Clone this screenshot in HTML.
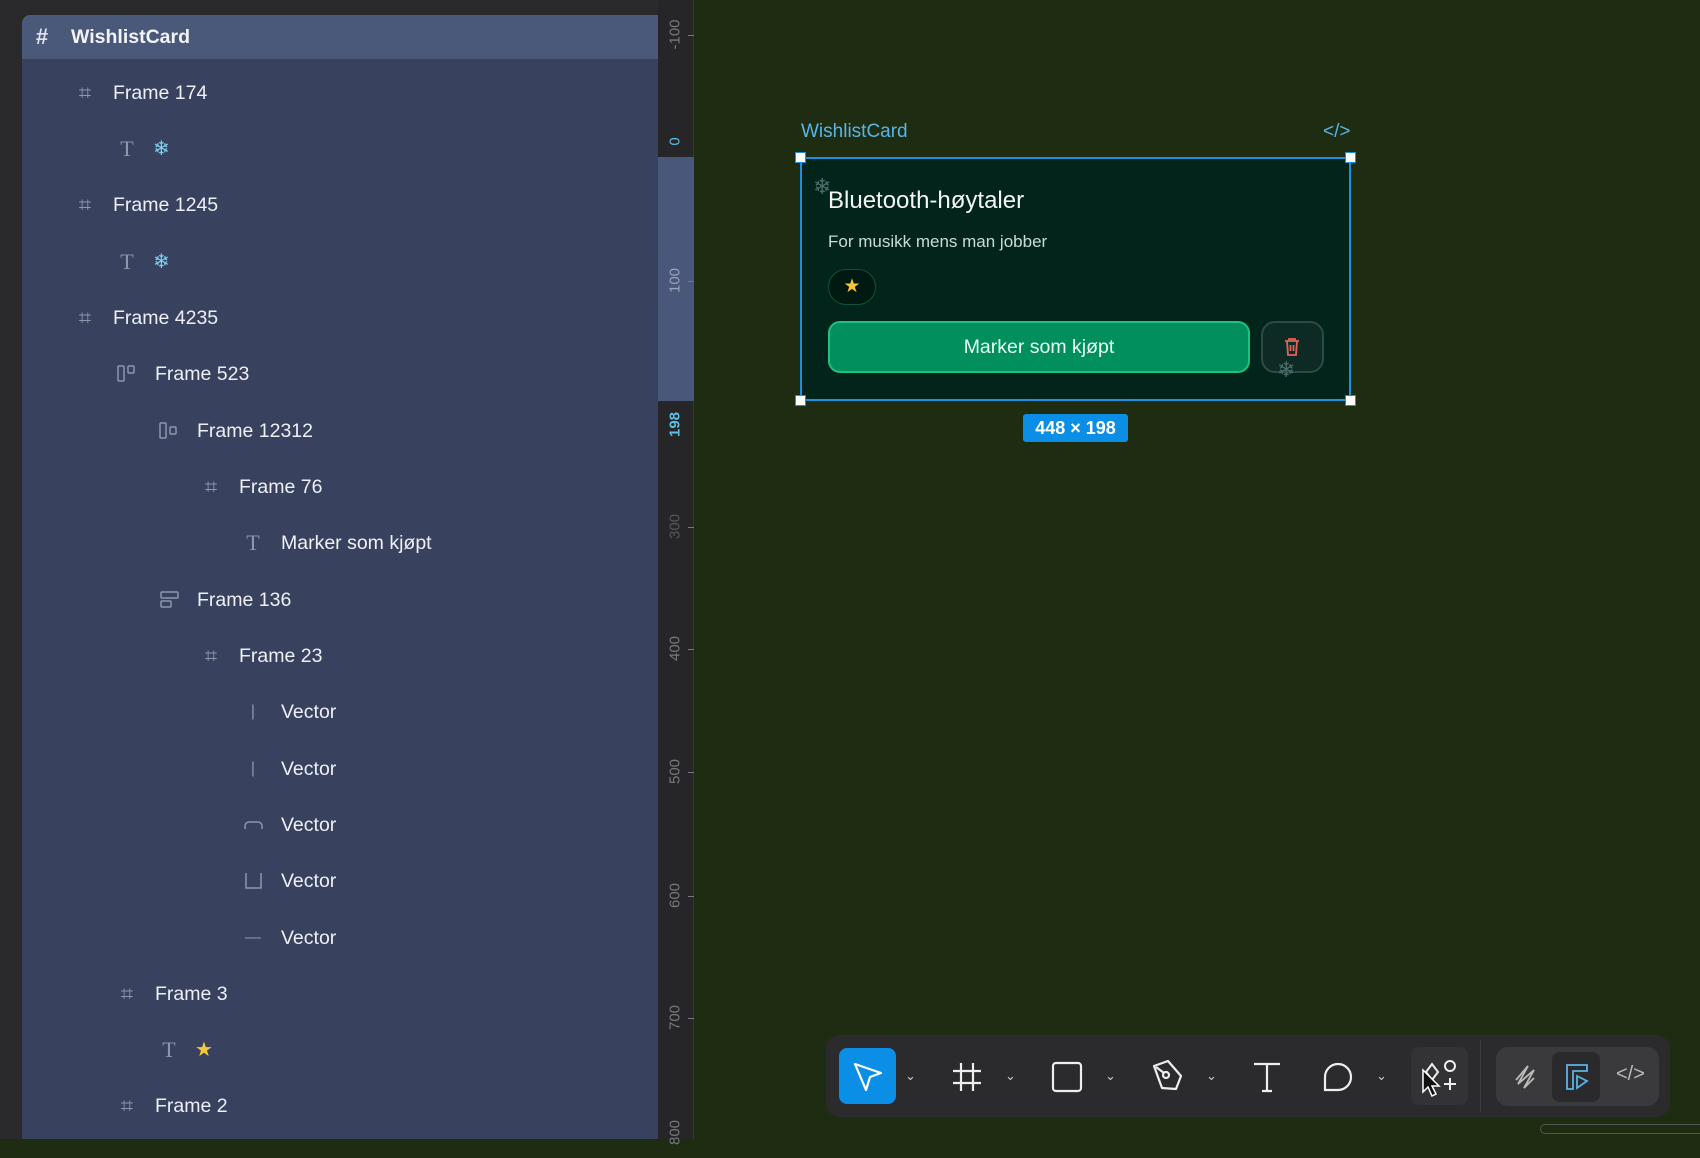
<!DOCTYPE html>
<html><head><meta charset="utf-8"><style>
*{margin:0;padding:0;box-sizing:border-box}
body{width:1700px;height:1139px;overflow:hidden;background:#1e2c12;font-family:"Liberation Sans",sans-serif;position:relative}
.abs{position:absolute}
#lb{left:0;top:0;width:22px;height:1139px;background:#2a2a2c}
#top{left:0;top:0;width:658px;height:15px;background:#2a2a2c}
#panel{left:22px;top:15px;width:636px;height:1124px;background:#38425e;border-top-left-radius:8px}
#sel{left:22px;top:15px;width:636px;height:44px;background:#4a5879;border-top-left-radius:8px}
.row{position:absolute;height:30px;line-height:30px;color:#eef0f5;font-size:19.5px;white-space:nowrap}
.ic{position:absolute;top:0;width:24px;height:30px;color:#8e96aa;font-size:22px;text-align:center}
.ic svg{position:absolute;left:2px;top:5px}
#ruler{left:658px;top:0;width:36px;height:1139px;background:#262628;border-right:1px solid #34363a}
#rh{left:658px;top:157px;width:36px;height:244px;background:#48577a}
.rl{position:absolute;left:658px;color:#77797e;font-size:15px;transform:rotate(-90deg);transform-origin:center;text-align:center;width:50px;margin-left:-8px}
.tk{position:absolute;left:688px;width:6px;height:1px;background:#77797e}
.hd{position:absolute;width:11px;height:11px;background:#fff;border:1.5px solid #1a8fe0}
.tb{position:absolute;top:1035px;height:82px;background:#2b2b2d;border-radius:14px}
.car{position:absolute;top:1068px;color:#ccc;font-size:13px}
</style></head><body>
<div id="lb" class="abs"></div><div id="top" class="abs"></div>
<div id="panel" class="abs"></div><div id="sel" class="abs"></div>

<div class="row" style="left:30px;top:22px;font-weight:bold;color:#f2f4f8"><span class="ic" style="left:0;color:#dfe3ee">#</span><span style="position:absolute;left:41px">WishlistCard</span></div>

<div class="row" style="left:73px;top:78px"><span class="ic" style="left:0">⌗</span><span style="position:absolute;left:40px">Frame 174</span></div>
<div class="row" style="left:115px;top:134px"><span class="ic" style="left:0;font-family:'Liberation Serif',serif">T</span><span style="position:absolute;left:38px;color:#7fd3f0;font-size:20px">❄</span></div>
<div class="row" style="left:73px;top:190px"><span class="ic" style="left:0">⌗</span><span style="position:absolute;left:40px">Frame 1245</span></div>
<div class="row" style="left:115px;top:247px"><span class="ic" style="left:0;font-family:'Liberation Serif',serif">T</span><span style="position:absolute;left:38px;color:#7fd3f0;font-size:20px">❄</span></div>
<div class="row" style="left:73px;top:303px"><span class="ic" style="left:0">⌗</span><span style="position:absolute;left:40px">Frame 4235</span></div>
<div class="row" style="left:115px;top:359px"><span class="ic" style="left:0"><svg width="22" height="20" viewBox="0 0 22 20" fill="none" stroke="#8e96aa" stroke-width="1.5"><rect x="1" y="2" width="6" height="15" rx="1"/><rect x="11" y="2" width="6" height="7" rx="1"/></svg></span><span style="position:absolute;left:40px">Frame 523</span></div>
<div class="row" style="left:157px;top:416px"><span class="ic" style="left:0"><svg width="22" height="20" viewBox="0 0 22 20" fill="none" stroke="#8e96aa" stroke-width="1.5"><rect x="1" y="2" width="6" height="15" rx="1"/><rect x="11" y="6" width="6" height="7" rx="1"/></svg></span><span style="position:absolute;left:40px">Frame 12312</span></div>
<div class="row" style="left:199px;top:472px"><span class="ic" style="left:0">⌗</span><span style="position:absolute;left:40px">Frame 76</span></div>
<div class="row" style="left:241px;top:528px"><span class="ic" style="left:0;font-family:'Liberation Serif',serif">T</span><span style="position:absolute;left:40px">Marker som kjøpt</span></div>
<div class="row" style="left:157px;top:585px"><span class="ic" style="left:0"><svg width="22" height="20" viewBox="0 0 22 20" fill="none" stroke="#8e96aa" stroke-width="1.5"><rect x="2" y="2" width="17" height="6" rx="1"/><rect x="2" y="11" width="10" height="6" rx="1"/></svg></span><span style="position:absolute;left:40px">Frame 136</span></div>
<div class="row" style="left:199px;top:641px"><span class="ic" style="left:0">⌗</span><span style="position:absolute;left:40px">Frame 23</span></div>
<div class="row" style="left:241px;top:697px"><span class="ic" style="left:0;font-size:16px">|</span><span style="position:absolute;left:40px">Vector</span></div>
<div class="row" style="left:241px;top:754px"><span class="ic" style="left:0;font-size:16px">|</span><span style="position:absolute;left:40px">Vector</span></div>
<div class="row" style="left:241px;top:810px"><span class="ic" style="left:0"><svg width="22" height="20" viewBox="0 0 22 20" fill="none" stroke="#8e96aa" stroke-width="1.5"><path d="M2 14V11a4 4 0 0 1 4-4h9a4 4 0 0 1 4 4v3"/></svg></span><span style="position:absolute;left:40px">Vector</span></div>
<div class="row" style="left:241px;top:866px"><span class="ic" style="left:0"><svg width="22" height="20" viewBox="0 0 22 20" fill="none" stroke="#8e96aa" stroke-width="1.5"><path d="M3 2v15h15V2"/></svg></span><span style="position:absolute;left:40px">Vector</span></div>
<div class="row" style="left:241px;top:923px"><span class="ic" style="left:0;font-size:16px">—</span><span style="position:absolute;left:40px">Vector</span></div>
<div class="row" style="left:115px;top:979px"><span class="ic" style="left:0">⌗</span><span style="position:absolute;left:40px">Frame 3</span></div>
<div class="row" style="left:157px;top:1035px"><span class="ic" style="left:0;font-family:'Liberation Serif',serif">T</span><span style="position:absolute;left:38px;color:#f6c83a;font-size:20px">★</span></div>
<div class="row" style="left:115px;top:1091px"><span class="ic" style="left:0">⌗</span><span style="position:absolute;left:40px">Frame 2</span></div>

<div id="ruler" class="abs"></div><div id="rh" class="abs"></div>
<div class="rl" style="top:26px">-100</div>
<div class="rl" style="top:133px;color:#5bbfe8">0</div>
<div class="rl" style="top:272px;color:#9aa3b8">100</div>
<div class="rl" style="top:416px;color:#5bbfe8;font-weight:bold">198</div>
<div class="rl" style="top:518px;color:#55575c">300</div>
<div class="rl" style="top:640px">400</div>
<div class="rl" style="top:763px">500</div>
<div class="rl" style="top:887px">600</div>
<div class="rl" style="top:1009px">700</div>
<div class="rl" style="top:1124px">800</div>
<div class="tk" style="top:35px"></div><div class="tk" style="top:281px"></div><div class="tk" style="top:527px"></div><div class="tk" style="top:649px"></div><div class="tk" style="top:772px"></div><div class="tk" style="top:896px"></div><div class="tk" style="top:1018px"></div>

<div class="abs" style="left:801px;top:121px;color:#5ab4e6;font-size:19px">WishlistCard</div>
<div class="abs" style="left:1323px;top:121px;color:#5ab4e6;font-size:19px">&lt;/&gt;</div>

<div class="abs" style="left:800px;top:157px;width:551px;height:244px;background:#02241b;border:2px solid #1b8fe0"></div>
<div class="abs" style="left:813px;top:174px;color:#4a6e6a;font-size:22px">❄</div>
<div class="abs" style="left:828px;top:187px;color:#f3f6f4;font-size:24px">Bluetooth-høytaler</div>
<div class="abs" style="left:828px;top:232px;color:#c9dcd4;font-size:17px">For musikk mens man jobber</div>
<div class="abs" style="left:828px;top:269px;width:48px;height:36px;border:1.5px solid #11523a;border-radius:18px;background:#001a12;color:#f7c531;font-size:19px;text-align:center;line-height:33px">★</div>
<div class="abs" style="left:828px;top:321px;width:422px;height:52px;background:#018f5e;border:2px solid #1cc27f;border-radius:12px;color:#e8fff4;font-size:19.5px;text-align:center;line-height:48px">Marker som kjøpt</div>
<div class="abs" style="left:1261px;top:321px;width:63px;height:52px;border:2px solid #2d4a45;border-radius:14px;background:#0d2a25"></div>
<svg class="abs" style="left:1283px;top:337px" width="18" height="20" viewBox="0 0 18 20" fill="none" stroke="#e0645a" stroke-width="1.8"><path d="M2 4h14M6 4V2h6v2M4 4l1 14h8l1-14M7.5 8v6M10.5 8v6"/></svg>
<div class="abs" style="left:1277px;top:357px;color:#4a6e6a;font-size:22px">❄</div>
<div class="hd" style="left:795px;top:152px"></div><div class="hd" style="left:1345px;top:152px"></div>
<div class="hd" style="left:795px;top:395px"></div><div class="hd" style="left:1345px;top:395px"></div>
<div class="abs" style="left:1023px;top:414px;width:105px;height:28px;background:#0b8ee6;border-radius:3px;color:#fff;font-size:18px;font-weight:bold;text-align:center;line-height:28px">448 × 198</div>

<div class="tb" style="left:826px;width:844px"></div>
<div class="abs" style="left:1480px;top:1040px;width:1px;height:72px;background:#3d3d40"></div>
<div class="abs" style="left:839px;top:1048px;width:57px;height:56px;background:#0b8ee6;border-radius:8px"></div>
<svg class="abs" style="left:851px;top:1060px" width="34" height="34" viewBox="0 0 34 34" fill="none" stroke="#fff" stroke-width="2.2" stroke-linejoin="round"><path d="M4 4L30 13L19 17L15 30Z"/></svg>
<div class="car" style="left:905px">⌄</div><div class="car" style="left:1005px">⌄</div><div class="car" style="left:1105px">⌄</div><div class="car" style="left:1206px">⌄</div><div class="car" style="left:1376px">⌄</div>
<svg class="abs" style="left:950px;top:1060px" width="34" height="34" viewBox="0 0 34 34" fill="none" stroke="#eee" stroke-width="2.2"><path d="M11 3v28M23 3v28M3 11h28M3 23h28"/></svg>
<svg class="abs" style="left:1050px;top:1060px" width="34" height="34" viewBox="0 0 34 34" fill="none" stroke="#eee" stroke-width="2.2"><rect x="3" y="3" width="28" height="28" rx="3"/></svg>
<svg class="abs" style="left:1150px;top:1058px" width="36" height="36" viewBox="0 0 36 36" fill="none" stroke="#eee" stroke-width="2.2" stroke-linejoin="round"><path d="M4 8L18 3L31 18L26 31L12 30Z"/><circle cx="16" cy="17" r="3"/><path d="M6 9L14 15"/></svg>
<svg class="abs" style="left:1250px;top:1060px" width="34" height="34" viewBox="0 0 34 34" fill="none" stroke="#eee" stroke-width="2.2"><path d="M4 4h26M17 4v27M12 31h10"/></svg>
<svg class="abs" style="left:1320px;top:1060px" width="34" height="34" viewBox="0 0 34 34" fill="none" stroke="#eee" stroke-width="2.2"><path d="M5 30V17A13 13 0 1 1 18 30Z"/></svg>
<div class="abs" style="left:1411px;top:1047px;width:57px;height:58px;background:#333336;border-radius:8px"></div>
<svg class="abs" style="left:1420px;top:1058px" width="40" height="38" viewBox="0 0 40 38" fill="none" stroke="#eee" stroke-width="2"><path d="M6 14l6-8 6 8-6 8z"/><circle cx="30" cy="8" r="5"/><path d="M30 20v12M24 26h12"/></svg>
<svg class="abs" style="left:1421px;top:1068px" width="22" height="30" viewBox="0 0 22 30"><path d="M2 2v22l5-5 4 9 4-2-4-8h7z" fill="#111" stroke="#fff" stroke-width="1.5"/></svg>
<div class="abs" style="left:1496px;top:1047px;width:163px;height:59px;background:#3a3a3d;border-radius:12px"></div>
<div class="abs" style="left:1552px;top:1052px;width:48px;height:50px;background:#2a2a2c;border-radius:8px"></div>
<svg class="abs" style="left:1512px;top:1062px" width="28" height="30" viewBox="0 0 28 30" fill="none" stroke="#bbb" stroke-width="1.8"><path d="M4 18L16 4L6 22L22 8L12 26L22 16"/></svg>
<svg class="abs" style="left:1563px;top:1062px" width="28" height="30" viewBox="0 0 28 30" fill="none" stroke="#5ab4e6" stroke-width="1.8"><path d="M4 3h20v6H10v18H4z"/><path d="M14 14l10 5-10 7z"/></svg>
<div class="abs" style="left:1616px;top:1063px;color:#bbb;font-size:20px">&lt;/&gt;</div>
<div class="abs" style="left:1540px;top:1124px;width:170px;height:10px;border:1.5px solid #555;border-radius:5px"></div>
</body></html>
